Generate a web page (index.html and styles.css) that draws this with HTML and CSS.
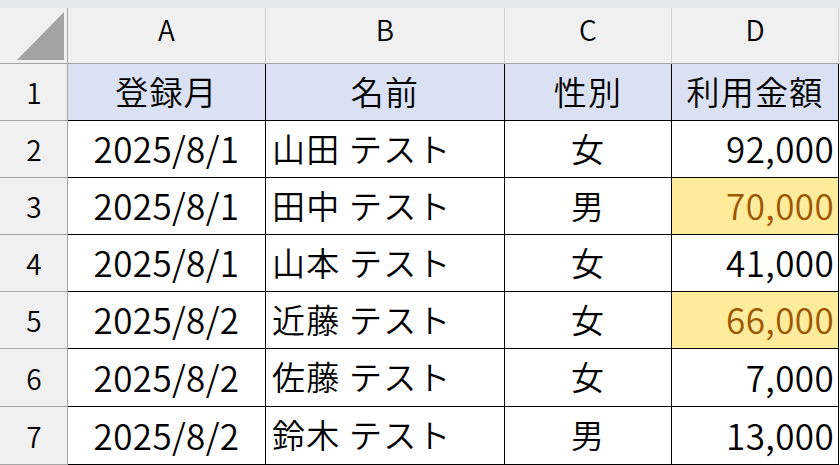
FILE: index.html
```html
<!DOCTYPE html>
<html lang="ja">
<head>
<meta charset="utf-8">
<link rel="stylesheet" href="styles.css">
</head>
<body>
<div class="strip"></div>
<div class="sheet">
  <div class="corner"><span class="tri"></span></div>
  <div class="colhead">A</div>
  <div class="colhead">B</div>
  <div class="colhead">C</div>
  <div class="colhead">D</div>
  <div class="colhead rest"></div>

  <div class="rowhead r57">1</div>
  <div class="cell hdr center">登録月</div>
  <div class="cell hdr center">名前</div>
  <div class="cell hdr center">性別</div>
  <div class="cell hdr center">利用金額</div>
  <div class="blank"></div>

  <div class="rowhead r57">2</div>
  <div class="cell center num">2025/8/1</div>
  <div class="cell left">山田 テスト</div>
  <div class="cell center">女</div>
  <div class="cell right num">92,000</div>
  <div class="blank"></div>

  <div class="rowhead r57">3</div>
  <div class="cell center num">2025/8/1</div>
  <div class="cell left">田中 テスト</div>
  <div class="cell center">男</div>
  <div class="cell right num neutral">70,000</div>
  <div class="blank"></div>

  <div class="rowhead r57">4</div>
  <div class="cell center num">2025/8/1</div>
  <div class="cell left">山本 テスト</div>
  <div class="cell center">女</div>
  <div class="cell right num">41,000</div>
  <div class="blank"></div>

  <div class="rowhead r57">5</div>
  <div class="cell center num">2025/8/2</div>
  <div class="cell left">近藤 テスト</div>
  <div class="cell center">女</div>
  <div class="cell right num neutral">66,000</div>
  <div class="blank"></div>

  <div class="rowhead r58">6</div>
  <div class="cell center num">2025/8/2</div>
  <div class="cell left">佐藤 テスト</div>
  <div class="cell center">女</div>
  <div class="cell right num">7,000</div>
  <div class="blank"></div>

  <div class="rowhead r58">7</div>
  <div class="cell center num">2025/8/2</div>
  <div class="cell left">鈴木 テスト</div>
  <div class="cell center">男</div>
  <div class="cell right num">13,000</div>
  <div class="blank"></div>

  <div class="rowhead stub"></div>
  <div class="cell stub"></div>
  <div class="cell stub"></div>
  <div class="cell stub"></div>
  <div class="cell stub"></div>
  <div class="blank stub"></div>
</div>
</body>
</html>
```

FILE: styles.css
```css
* { box-sizing: border-box; }
html, body {
  margin: 0;
  padding: 0;
  background: #ffffff;
  overflow: hidden;
  width: 840px;
  height: 465px;
}
body {
  font-family: "Noto Sans CJK JP", "Noto Sans", sans-serif;
  font-weight: 350;
  color: #000;
}
.strip {
  height: 8px;
  background: #e6e7ea;
}
.sheet {
  display: grid;
  grid-template-columns: 68px 198px 239px 167px 167px 1fr;
  grid-auto-rows: auto;
}
.corner {
  height: 56px;
  background: #f0f0f0;
  border-right: 1px solid #a6a6a6;
  border-bottom: 1px solid #a6a6a6;
  position: relative;
}
.tri {
  position: absolute;
  left: 17px;
  top: 4px;
  width: 47px;
  height: 48px;
  background: #a3a3a3;
  clip-path: polygon(100% 0, 100% 100%, 0 100%);
}
.colhead {
  height: 56px;
  background: #f0f0f0;
  border-right: 1px solid #d0d0d0;
  border-bottom: 1px solid #a6a6a6;
  display: flex;
  align-items: center;
  justify-content: center;
  font-size: 28px;
  padding-bottom: 14px;
}
.colhead.rest { border-right: none; }
.rowhead {
  background: #f0f0f0;
  border-right: 1px solid #a6a6a6;
  border-bottom: 1px solid #a6a6a6;
  display: flex;
  align-items: center;
  justify-content: center;
  font-size: 28px;
  padding-left: 1px;
}
.r57 { height: 57px; }
.r58 { height: 58px; }
.stub { height: 2px; padding: 0; border-bottom: none; }
.cell {
  border-right: 1px solid #000;
  border-bottom: 1px solid #000;
  display: flex;
  align-items: center;
  font-size: 33px;
  letter-spacing: 1.2px;
  white-space: nowrap;
  padding: 0 5px 3px 5px;
}
.num { font-size: 35px; letter-spacing: 0.4px; }
.center { justify-content: center; }
.left { justify-content: flex-start; padding-left: 6px; }
.right { justify-content: flex-end; padding-right: 4px; }
.hdr { background: #d9e1f2; }
.neutral {
  background: #ffeb9c;
  color: #9c5700;
}
.blank { background: #fff; }
```
